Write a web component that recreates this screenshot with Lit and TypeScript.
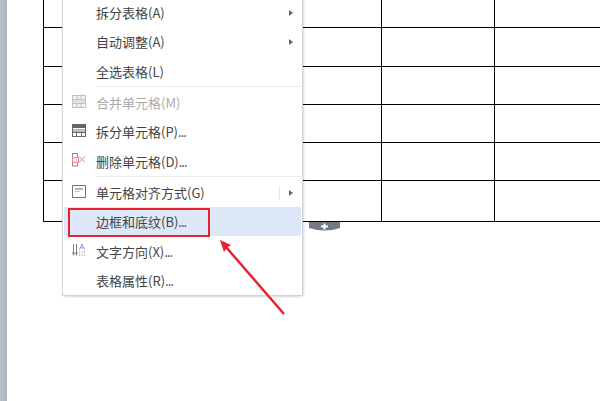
import { LitElement, html, css, svg } from "lit";
import { customElement } from "lit/decorators.js";

const ICONS: Record<string, unknown> = {
  merge: svg`<rect x="0.5" y="0.5" width="13" height="12" fill="#f2f2f2" stroke="#c2c2c2"/><rect x="1" y="5" width="12" height="3" fill="#e2e2e2"/><path d="M1 4.5H13M1 8.5H13M5 1V4M9 1V4M5 9V12M9 9V12" stroke="#c2c2c2" fill="none"/>`,
  split: svg`<rect x="0.5" y="0.5" width="13" height="12" fill="#fff" stroke="#666"/><rect x="1" y="1" width="12" height="3" fill="#666"/><rect x="1" y="5" width="12" height="3" fill="#bdbdbd"/><path d="M1 8.5H13M7 1V4M4.5 9V12M9.5 9V12" stroke="#666" fill="none"/>`,
  del: svg`<rect x="0.5" y="0.5" width="5" height="4" fill="none" stroke="#8a8a8a"/><rect x="0.5" y="9.5" width="5" height="3.5" fill="none" stroke="#8a8a8a"/><rect x="0.5" y="4.5" width="6" height="5" fill="#fbe3e5" stroke="#e58a92"/><path d="M7 3.5L13 9.5M13 3.5L7 9.5" stroke="#e9838c" fill="none"/>`,
  align: svg`<rect x="0.5" y="0.5" width="13" height="12" fill="#fff" stroke="#777"/><rect x="3" y="3" width="8" height="2" fill="#9db8e2"/><rect x="3" y="6" width="5" height="1" fill="#b9c9e6"/>`,
  dir: svg`<path d="M1.5 1V12M4.5 1V12" stroke="#808080" fill="none"/><path d="M0 9.5L1.5 13L3 9.5ZM3 9.5L4.5 13L6 9.5Z" fill="#808080"/><path d="M7.5 6.5L10 1L12.5 6.5M8.5 4.8H11.5" stroke="#7f9fd4" fill="none"/><path d="M7 9H8M9.5 9H10.5M12 9H13M7 12H8M9.5 12H10.5M12 12H13" stroke="#808080" fill="none"/>`,
};

interface Row { label?: string; dots?: boolean; icon?: string; arrow?: boolean; split?: boolean; off?: boolean; hot?: boolean; sep?: boolean; }

const ROWS: Row[] = [
  { label: "拆分表格(A)", arrow: true },
  { label: "自动调整(A)", arrow: true },
  { label: "全选表格(L)" },
  { sep: true },
  { label: "合并单元格(M)", icon: "merge", off: true },
  { label: "拆分单元格(P)", dots: true, icon: "split" },
  { label: "删除单元格(D)", dots: true, icon: "del" },
  { sep: true },
  { label: "单元格对齐方式(G)", icon: "align", arrow: true, split: true },
  { label: "边框和底纹(B)", dots: true, hot: true },
  { label: "文字方向(X)", dots: true, icon: "dir" },
  { label: "表格属性(R)", dots: true },
];

@customElement("app-root")
export class AppRoot extends LitElement {
  static styles = css`
    :host { display: block; width: 600px; height: 401px; overflow: hidden; position: relative; background: #fff;
      font-family: "Noto Sans CJK SC", "Liberation Sans", sans-serif; }
    .page { display: flex; height: 100%; }
    .rail { width: 7px; flex: none; background: linear-gradient(90deg, #b9bdc9, #b3b7c4 85%, #a9adba); }
    .doc { flex: 1; padding-left: 36px; overflow: hidden; }
    .table { display: grid; grid-template-columns: 338px 113px 120px; grid-template-rows: 28px 39px 38px 38px 38px 41px;
      border-left: 1px solid #000; width: 571px; }
    .cell { border-right: 1px solid #000; border-bottom: 1px solid #000; }
    .menu { position: absolute; left: 63px; top: -2px; width: 239px; height: 297px; box-sizing: border-box; background: #fff;
      padding: 0 1px; box-shadow: 0 0 0 1px #d4d4d4, 1px 1px 3px rgba(0,0,0,.28); display: flex; flex-direction: column; }
    .row { height: 29.3px; flex: none; display: flex; align-items: center; padding-left: 32px; font-size: 13px; color: #444; position: relative; line-height: 1; }
    .row.hot { background: #dce8f8; }
    .row.off { color: #aaa; }
    .dots { letter-spacing: -1px; }
    .sep { height: 1px; flex: none; background: #ececec; margin: 0 0 1px 32px; }
    .icon { position: absolute; left: 8px; top: 7px; width: 14px; height: 14px; }
    .arrow { position: absolute; right: 8px; top: 12px; width: 0; height: 0; border-left: 4px solid #666; border-top: 3px solid transparent; border-bottom: 3px solid transparent; }
    .vbar { position: absolute; right: 21px; top: 8px; bottom: 8px; width: 1px; background: #e4e4e4; }
    .mark { position: absolute; left: 68px; top: 208px; width: 142px; height: 29px; box-sizing: border-box; border: 2px solid #e8202e; }
    .handle { position: absolute; left: 309px; top: 222px; }
    .callout { position: absolute; left: 215px; top: 235px; }
  `;

  render() {
    const cells = Array.from({ length: 18 });
    return html`
      <div class="page">
        <div class="rail"></div>
        <div class="doc"><div class="table">${cells.map(() => html`<div class="cell"></div>`)}</div></div>
      </div>
      <svg class="handle" width="31" height="10" viewBox="0 0 31 10">
        <path d="M0 0H31V6Q16 11 0 6Z" fill="#737b85"/>
        <path d="M15.5 1.5V7.5M12 4.5H19" stroke="#fff" stroke-width="2" fill="none"/>
      </svg>
      <div class="menu">
        ${ROWS.map((r) => r.sep
          ? html`<div class="sep"></div>`
          : html`<div class="row ${r.hot ? "hot" : ""} ${r.off ? "off" : ""}">
              ${r.icon ? html`<svg class="icon" viewBox="0 0 14 14">${ICONS[r.icon]}</svg>` : ""}
              <span>${r.label}${r.dots ? html`<span class="dots">...</span>` : ""}</span>
              ${r.split ? html`<span class="vbar"></span>` : ""}
              ${r.arrow ? html`<span class="arrow"></span>` : ""}
            </div>`)}
      </div>
      <div class="mark"></div>
      <svg class="callout" width="75" height="85" viewBox="0 0 75 85">
        <path d="M69 79L11 12" stroke="#ee1c2e" stroke-width="2.4" fill="none"/>
        <path d="M5 5L16 10L12 12.5L9 17Z" fill="#ee1c2e"/>
      </svg>
    `;
  }
}
